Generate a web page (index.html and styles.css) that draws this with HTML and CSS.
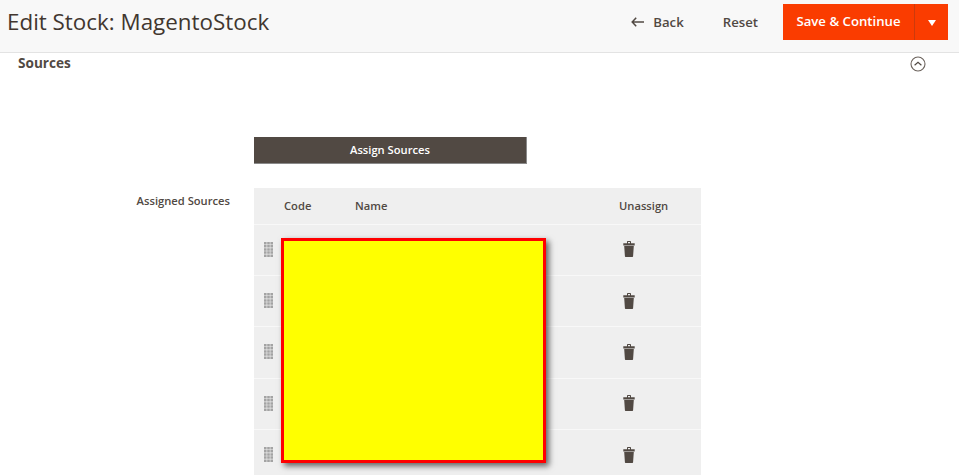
FILE: index.html
```html
<!DOCTYPE html>
<html lang="en">
<head>
  <meta charset="UTF-8">
  <meta name="viewport" content="width=device-width, initial-scale=1.0">
  <title>Edit Stock: MagentoStock</title>
  <link rel="stylesheet" href="styles.css">
</head>
<body>
  <svg class="icon-defs" width="0" height="0">
    <symbol id="icon-drag" viewBox="0 0 9 15">
      <path d="M0 0h2.600v2.500H0zM3.200 0h2.600v2.500H3.200zM6.400 0H9v2.500H6.400zM0 3.100h2.600v2.500H0zM3.200 3.100h2.600v2.500H3.200zM6.400 3.100H9v2.500H6.400zM0 6.200h2.600v2.500H0zM3.200 6.200h2.600v2.500H3.200zM6.400 6.200H9v2.500H6.400zM0 9.300h2.600v2.500H0zM3.200 9.300h2.600v2.500H3.200zM6.400 9.300H9v2.500H6.400zM0 12.400h2.600V15H0zM3.200 12.400h2.600V15H3.200zM6.400 12.400H9V15H6.400z" fill="#a3a3a3"/>
    </symbol>
    <symbol id="icon-trash" viewBox="0 0 12 16">
      <path d="M4 2.400V1C4 .4 4.400 0 5 0h2c.6 0 1 .4 1 1v1.400H7V1H5v1.400z M.3 2.300h11.400v2.200H.3z M1.200 5h9.600l-.7 10c0 .6-.4 1-1 1H2.900c-.6 0-1-.4-1-1z" fill="#514943"/>
    </symbol>
  </svg>

  <header class="page-header">
    <h1>Edit Stock: MagentoStock</h1>
    <div class="actions">
      <a class="back" href="#">
        <svg class="back-arrow" width="13" height="10" viewBox="0 0 13 10"><path d="M5.200 .8 1.200 5l4 4.200M1.200 5H13" fill="none" stroke="#514943" stroke-width="1.500"/></svg>
        Back
      </a>
      <a class="reset" href="#">Reset</a>
      <div class="save">
        <button class="save-main" type="button">Save &amp; Continue</button>
        <button class="save-toggle" type="button" aria-label="More"><span class="caret"></span></button>
      </div>
    </div>
  </header>

  <section class="sources">
    <div class="section-title">
      <h2>Sources</h2>
      <svg class="collapse" width="16" height="16" viewBox="0 0 16 16"><circle cx="8" cy="8" r="7" fill="none" stroke="#6b625c" stroke-width="1.100"/><path d="M4.600 9.200 8 6.300l3.400 2.900" fill="none" stroke="#514943" stroke-width="1.200"/></svg>
    </div>

    <div class="assign-row">
      <button class="assign" type="button">Assign Sources</button>
    </div>

    <div class="field">
      <div class="field-label">Assigned Sources</div>
      <div class="grid">
        <div class="grid-head">
          <span class="col-code">Code</span>
          <span class="col-name">Name</span>
          <span class="col-unassign">Unassign</span>
        </div>
        <div class="grid-row">
          <svg class="drag"><use href="#icon-drag"/></svg>
          <svg class="trash"><use href="#icon-trash"/></svg>
        </div>
        <div class="grid-row">
          <svg class="drag"><use href="#icon-drag"/></svg>
          <svg class="trash"><use href="#icon-trash"/></svg>
        </div>
        <div class="grid-row">
          <svg class="drag"><use href="#icon-drag"/></svg>
          <svg class="trash"><use href="#icon-trash"/></svg>
        </div>
        <div class="grid-row">
          <svg class="drag"><use href="#icon-drag"/></svg>
          <svg class="trash"><use href="#icon-trash"/></svg>
        </div>
        <div class="grid-row">
          <svg class="drag"><use href="#icon-drag"/></svg>
          <svg class="trash"><use href="#icon-trash"/></svg>
        </div>
        <div class="redaction"></div>
      </div>
    </div>
  </section>
</body>
</html>
```

FILE: styles.css
```css
* {
  margin: 0;
  padding: 0;
  box-sizing: border-box;
}

html, body {
  height: 475px;
  overflow: hidden;
}

body {
  font-family: 'Open Sans', sans-serif;
  background: #fff;
  color: #41362f;
  font-size: 11.200px;
}

.icon-defs {
  display: block;
  height: 0;
}

/* Header */
.page-header {
  height: 53px;
  background: #f8f8f8;
  border-bottom: 1px solid #e3e3e3;
  display: flex;
  justify-content: space-between;
  padding: 4px 11px 0 7px;
}

h1 {
  font-size: 22.400px;
  font-weight: 400;
  line-height: 35px;
  color: #41362f;
}

.actions {
  display: flex;
  height: 36px;
  align-items: center;
}

.back, .reset {
  font-size: 13.200px;
  font-weight: 600;
  color: #514943;
  text-decoration: none;
  margin-top: -1px;
}

.back {
  display: flex;
  align-items: center;
  gap: 9px;
  margin-right: 39px;
}

.reset {
  margin-right: 25px;
}

.save {
  display: flex;
  height: 36px;
  background: #fa3c00;
}

.save button {
  background: none;
  border: none;
  color: #fff;
  font-family: inherit;
}

.save-main {
  width: 132px;
  padding-bottom: 2px;
  font-size: 13.200px;
  font-weight: 600;
  border-right: 1px solid #cc3a0c !important;
}

.save-toggle {
  width: 33px;
  display: flex;
  align-items: center;
  justify-content: center;
}

.caret {
  border-left: 4.500px solid transparent;
  border-right: 4.500px solid transparent;
  border-top: 6.500px solid #fff;
  margin-top: 2px;
}

/* Sources section */
.sources {
  padding: 0 34px 0 18px;
}

.section-title {
  display: flex;
  justify-content: space-between;
  height: 84px;
}

h2 {
  font-size: 13.600px;
  font-weight: 700;
  line-height: 20px;
  color: #514943;
}

.collapse {
  margin-top: 3px;
  margin-right: -1px;
}

.assign-row {
  padding-left: 236px;
}

.assign {
  display: block;
  width: 273px;
  height: 27px;
  padding-bottom: 2px;
  background: #514943;
  border: none;
  border-right: 1px solid #8a8a8a;
  border-bottom: 1px solid #8a8a8a;
  color: #fff;
  font-family: inherit;
  font-size: 11.200px;
  font-weight: 600;
}

.field {
  display: flex;
  margin-top: 24px;
}

.field-label {
  width: 212px;
  text-align: right;
  font-weight: 600;
  color: #514943;
  padding-top: 5px;
  margin-right: 24px;
}

/* Grid */
.grid {
  position: relative;
  width: 447px;
  background: #efefef;
}

.grid-head {
  height: 36.500px;
  border-bottom: 1px solid #f8f8f8;
  display: flex;
  align-items: center;
  font-weight: 600;
  color: #514943;
  padding-bottom: 1px;
}

.col-code {
  margin-left: 30px;
  width: 71px;
}

.col-name {
  width: 264px;
}

.grid-row {
  height: 51.400px;
  border-bottom: 1px solid #f8f8f8;
  display: flex;
  align-items: center;
  justify-content: space-between;
  padding: 0 66px 1px 10px;
}

.drag {
  width: 9px;
  height: 15px;
}

.trash {
  width: 12px;
  height: 16px;
}

.redaction {
  position: absolute;
  left: 27px;
  top: 50px;
  width: 265px;
  height: 225px;
  background: #ff0;
  border: 3px solid #f00;
  box-shadow: 3px 3px 6px rgba(0, 0, 0, 0.6);
}
```
